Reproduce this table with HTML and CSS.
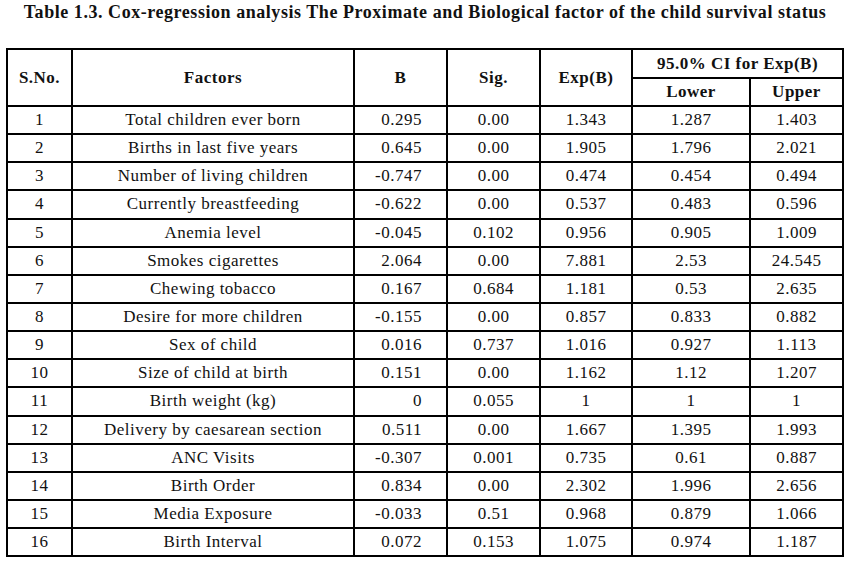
FILE: index.html
```html
<!DOCTYPE html>
<html>
<head>
<meta charset="utf-8">
<link rel="stylesheet" href="styles.css">
</head>
<body>
<div class="page">
<h1 class="title">Table 1.3. Cox-regression analysis The Proximate and Biological factor of the child survival status</h1>
<table class="data">
<colgroup>
<col class="c-sno"><col class="c-fac"><col class="c-b"><col class="c-sig"><col class="c-exp"><col class="c-low"><col class="c-up">
</colgroup>
<thead>
<tr class="h1"><th rowspan="2">S.No.</th><th rowspan="2">Factors</th><th rowspan="2">B</th><th rowspan="2">Sig.</th><th rowspan="2">Exp(B)</th><th colspan="2">95.0% CI for Exp(B)</th></tr>
<tr class="h2"><th>Lower</th><th>Upper</th></tr>
</thead>
<tbody>
<tr><td>1</td><td>Total children ever born</td><td class="r">0.295</td><td>0.00</td><td>1.343</td><td>1.287</td><td>1.403</td></tr>
<tr><td>2</td><td>Births in last five years</td><td class="r">0.645</td><td>0.00</td><td>1.905</td><td>1.796</td><td>2.021</td></tr>
<tr><td>3</td><td>Number of living children</td><td class="r">-0.747</td><td>0.00</td><td>0.474</td><td>0.454</td><td>0.494</td></tr>
<tr><td>4</td><td>Currently breastfeeding</td><td class="r">-0.622</td><td>0.00</td><td>0.537</td><td>0.483</td><td>0.596</td></tr>
<tr><td>5</td><td>Anemia level</td><td class="r">-0.045</td><td>0.102</td><td>0.956</td><td>0.905</td><td>1.009</td></tr>
<tr><td>6</td><td>Smokes cigarettes</td><td class="r">2.064</td><td>0.00</td><td>7.881</td><td>2.53</td><td>24.545</td></tr>
<tr><td>7</td><td>Chewing tobacco</td><td class="r">0.167</td><td>0.684</td><td>1.181</td><td>0.53</td><td>2.635</td></tr>
<tr><td>8</td><td>Desire for more children</td><td class="r">-0.155</td><td>0.00</td><td>0.857</td><td>0.833</td><td>0.882</td></tr>
<tr><td>9</td><td>Sex of child</td><td class="r">0.016</td><td>0.737</td><td>1.016</td><td>0.927</td><td>1.113</td></tr>
<tr><td>10</td><td>Size of child at birth</td><td class="r">0.151</td><td>0.00</td><td>1.162</td><td>1.12</td><td>1.207</td></tr>
<tr><td>11</td><td>Birth weight (kg)</td><td class="r">0</td><td>0.055</td><td>1</td><td>1</td><td>1</td></tr>
<tr><td>12</td><td>Delivery by caesarean section</td><td class="r">0.511</td><td>0.00</td><td>1.667</td><td>1.395</td><td>1.993</td></tr>
<tr><td>13</td><td>ANC Visits</td><td class="r">-0.307</td><td>0.001</td><td>0.735</td><td>0.61</td><td>0.887</td></tr>
<tr><td>14</td><td>Birth Order</td><td class="r">0.834</td><td>0.00</td><td>2.302</td><td>1.996</td><td>2.656</td></tr>
<tr><td>15</td><td>Media Exposure</td><td class="r">-0.033</td><td>0.51</td><td>0.968</td><td>0.879</td><td>1.066</td></tr>
<tr><td>16</td><td>Birth Interval</td><td class="r">0.072</td><td>0.153</td><td>1.075</td><td>0.974</td><td>1.187</td></tr>
</tbody>
</table>
</div>
</body>
</html>
```
FILE: styles.css
```css
html, body {
  margin: 0;
  padding: 0;
  background: #fff;
}
.page {
  width: 850px;
  padding: 0 6px 0 6px;
  box-sizing: border-box;
  font-family: "Liberation Serif", "Times New Roman", serif;
  color: #111;
}
.title {
  margin: 0;
  padding-top: 2px;
  height: 48px;
  box-sizing: border-box;
  font-size: 18px;
  font-weight: bold;
  letter-spacing: 0.55px;
  text-align: center;
  line-height: 20px;
  white-space: nowrap;
}
.data {
  border-collapse: collapse;
  table-layout: fixed;
  width: 837px;
  font-size: 17px;
  letter-spacing: 0.5px;
}
.data th, .data td {
  border: 2px solid #000;
  text-align: center;
  padding: 0 4px;
  white-space: nowrap;
}
.data th {
  font-weight: bold;
}
.h1 th { height: 27px; }
.h2 th { height: 26px; }
.data td {
  height: 26.15px;
}
.data td.r {
  text-align: right;
  padding-right: 24px;
}
.c-sno { width: 65px; }
.c-fac { width: 282px; }
.c-b { width: 93px; }
.c-sig { width: 93px; }
.c-exp { width: 92px; }
.c-low { width: 118px; }
.c-up { width: 93px; }
```
